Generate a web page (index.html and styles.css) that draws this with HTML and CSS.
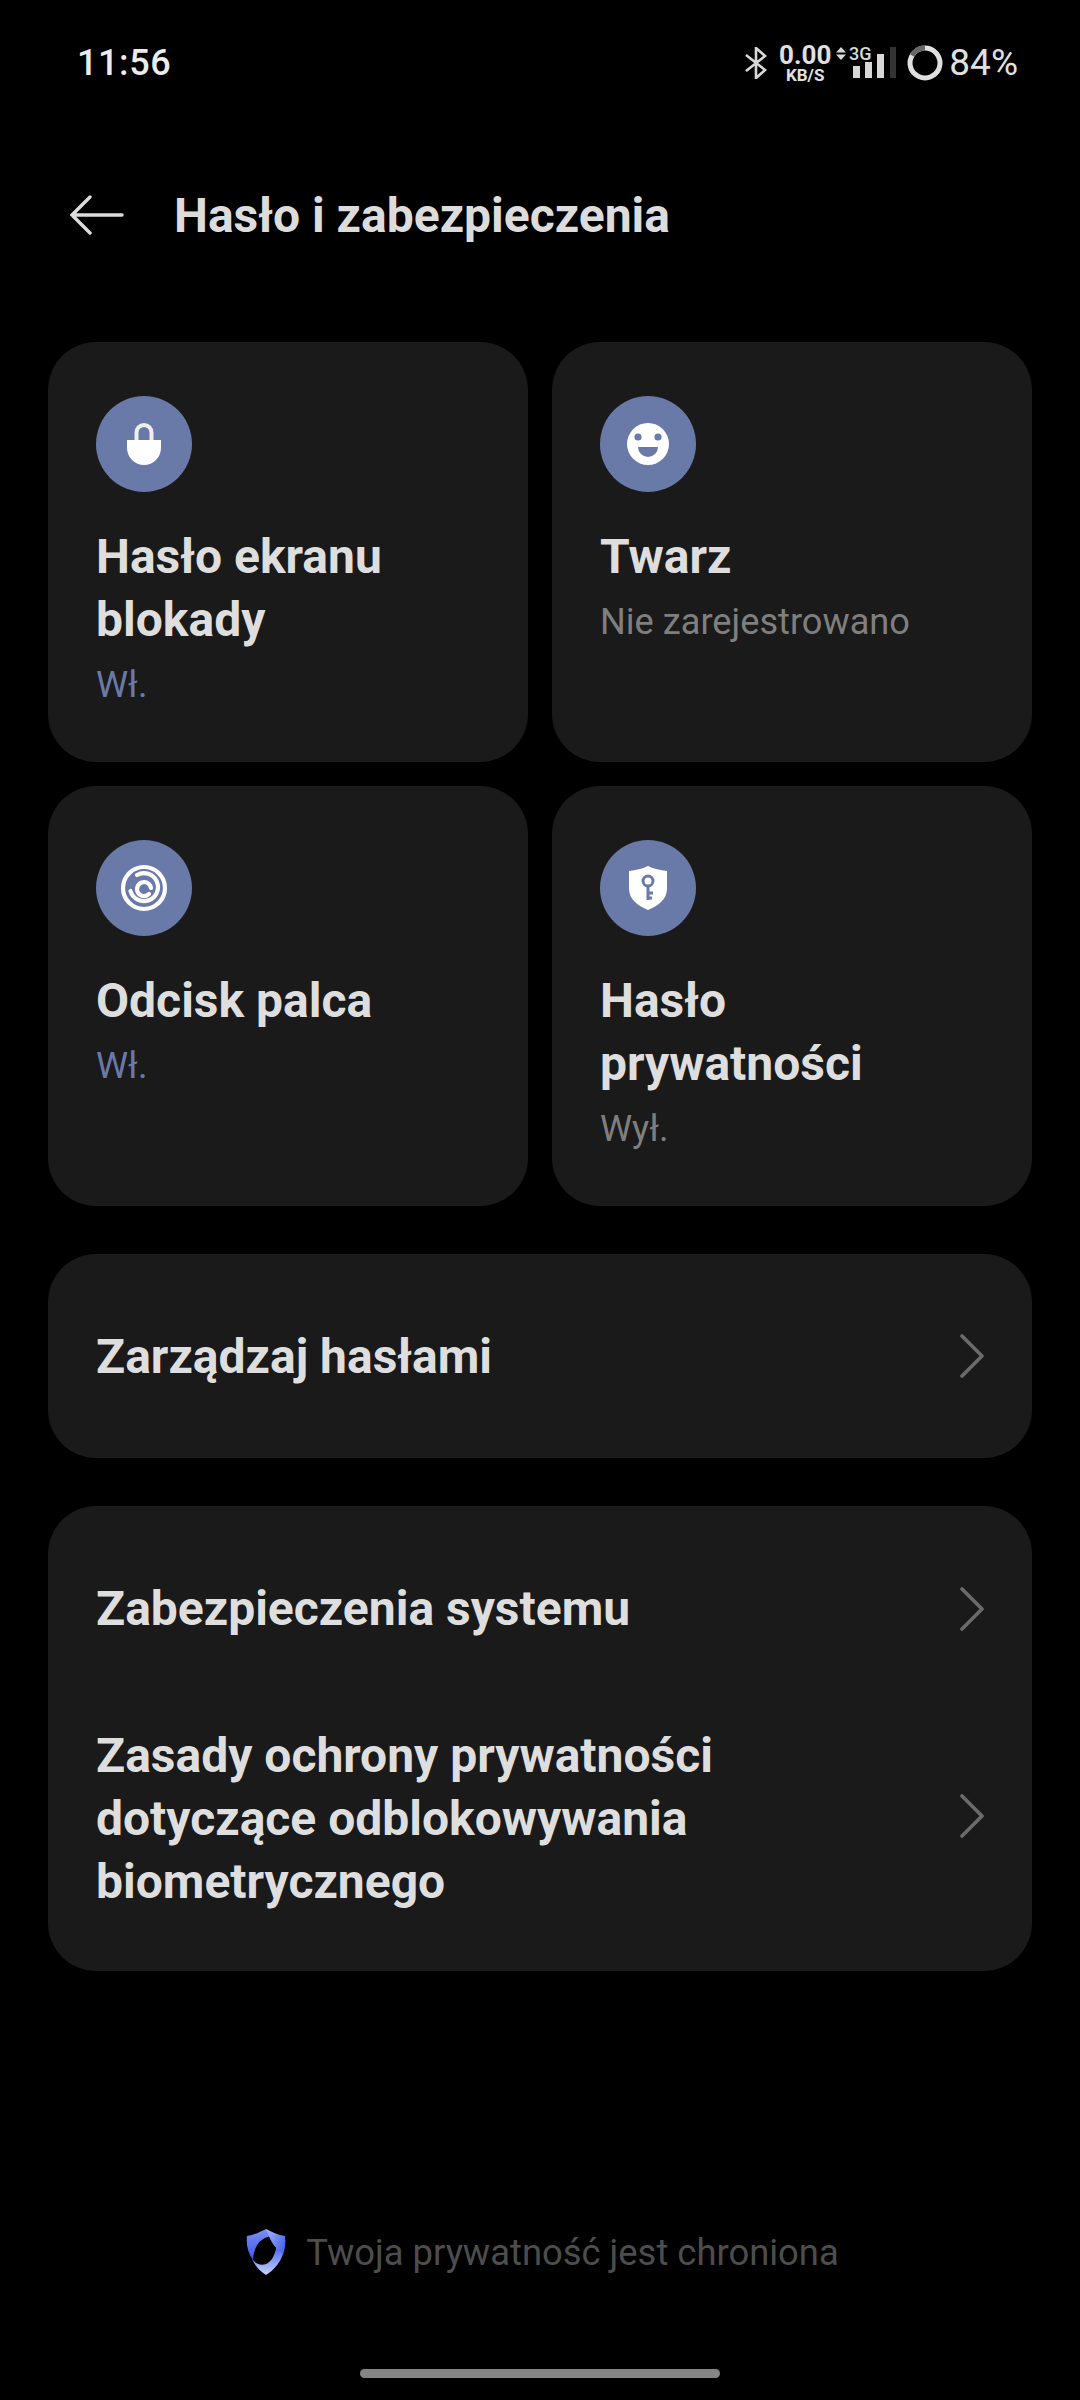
FILE: index.html
```html
<!DOCTYPE html>
<html lang="pl">
<head>
  <meta charset="UTF-8" />
  <meta name="viewport" content="width=device-width, initial-scale=1.0" />
  <title>Hasło i zabezpieczenia</title>
  <link rel="stylesheet" href="styles.css">
</head>
<body>
  <div class="status-bar">
    <span class="time">11:56</span>
    <div class="status-icons">
      <svg class="bt" width="22" height="32" viewBox="0 0 22 32" fill="none" stroke="#d8d8d8" stroke-width="2.6">
        <path d="M1 8 L20 23 L11 31 V1 L20 9 L1 24" />
      </svg>
      <div class="speed">
        <span class="speed-num">0.00</span>
        <span class="speed-unit">KB/S</span>
      </div>
      <svg class="net" width="60" height="40" viewBox="0 -4 60 40">
        <path d="M0 5.5 L5 0 L10 5.5 Z M0 7.5 L5 13 L10 7.5 Z" fill="#d8d8d8" />
        <text x="13" y="13" class="net-label">3G</text>
        <rect x="17" y="19" width="7" height="12" fill="#d8d8d8" />
        <rect x="29" y="15" width="7" height="16" fill="#d8d8d8" />
        <rect x="41" y="7" width="7" height="24" fill="#d8d8d8" />
        <rect x="54" y="0" width="6" height="31" fill="#333" />
      </svg>
      <svg class="battery" width="36" height="36" viewBox="0 0 36 36" fill="none" stroke-width="5">
        <circle cx="18" cy="18" r="15" stroke="#e0e0e0" />
        <path d="M18 3 A15 15 0 0 0 5 10.5" stroke="#666" />
      </svg>
      <span class="percent">84%</span>
    </div>
  </div>

  <header class="top-bar">
    <svg class="back" width="54" height="40" viewBox="0 0 54 40" fill="none" stroke="#dcdcdc" stroke-width="3.4" stroke-linecap="round">
      <path d="M2 20 H52 M20 2 L2 20 L20 38" />
    </svg>
    <h1 class="page-title">Hasło i zabezpieczenia</h1>
  </header>

  <main class="content">
    <div class="tile-grid">
      <div class="tile">
        <div class="tile-icon">
          <svg width="34" height="42" viewBox="0 0 34 42">
            <path d="M9.5 17 V9.5 A7.5 7.5 0 0 1 24.5 9.5 V17" fill="none" stroke="#eee" stroke-width="4" />
            <path d="M0 17 H34 V25 A17 17 0 0 1 0 25 Z" fill="#fff" />
          </svg>
        </div>
        <div class="tile-title">Hasło ekranu blokady</div>
        <div class="tile-sub on">Wł.</div>
      </div>
      <div class="tile">
        <div class="tile-icon">
          <svg width="44" height="44" viewBox="0 0 44 44">
            <circle cx="22" cy="22" r="21" fill="#fff" />
            <circle cx="12" cy="15" r="3.6" fill="#6a7aa8" />
            <circle cx="32" cy="15" r="3.6" fill="#6a7aa8" />
            <path d="M12 25 H32 A10 10 0 0 1 12 25 Z" fill="#6a7aa8" />
          </svg>
        </div>
        <div class="tile-title">Twarz</div>
        <div class="tile-sub">Nie zarejestrowano</div>
      </div>
      <div class="tile">
        <div class="tile-icon">
          <svg width="48" height="48" viewBox="0 0 48 48" fill="none" stroke="#fff" stroke-width="4.2" stroke-linecap="round">
            <circle cx="24" cy="24" r="21" />
            <path d="M17 11 A14 14 0 1 1 10.5 27" />
            <path d="M29 30 A7 7 0 1 1 31 24" />
          </svg>
        </div>
        <div class="tile-title">Odcisk palca</div>
        <div class="tile-sub on">Wł.</div>
      </div>
      <div class="tile">
        <div class="tile-icon">
          <svg width="40" height="46" viewBox="0 0 40 46">
            <path d="M20 1 C26 4 32 5 39 6 V24 C39 34 30 41 20 45 C10 41 1 34 1 24 V6 C8 5 14 4 20 1 Z" fill="#fff" />
            <circle cx="20" cy="16" r="5" fill="none" stroke="#6a7aa8" stroke-width="3" />
            <path d="M20 21 V35 M20 28 H25 M20 33 H24" fill="none" stroke="#6a7aa8" stroke-width="3" />
          </svg>
        </div>
        <div class="tile-title">Hasło prywatności</div>
        <div class="tile-sub">Wył.</div>
      </div>
    </div>

    <div class="list-card single">
      <div class="list-row">
        <span class="row-label">Zarządzaj hasłami</span>
        <svg class="chevron" width="24" height="44" viewBox="0 0 24 44" fill="none" stroke="#6b6b6b" stroke-width="3.6" stroke-linecap="round" stroke-linejoin="round">
          <path d="M2 2 L22 22 L2 42" />
        </svg>
      </div>
    </div>

    <div class="list-card">
      <div class="list-row">
        <span class="row-label">Zabezpieczenia systemu</span>
        <svg class="chevron" width="24" height="44" viewBox="0 0 24 44" fill="none" stroke="#6b6b6b" stroke-width="3.6" stroke-linecap="round" stroke-linejoin="round">
          <path d="M2 2 L22 22 L2 42" />
        </svg>
      </div>
      <div class="list-row">
        <span class="row-label">Zasady ochrony prywatności dotyczące odblokowywania biometrycznego</span>
        <svg class="chevron raised" width="24" height="44" viewBox="0 0 24 44" fill="none" stroke="#6b6b6b" stroke-width="3.6" stroke-linecap="round" stroke-linejoin="round">
          <path d="M2 2 L22 22 L2 42" />
        </svg>
      </div>
    </div>
  </main>

  <footer class="footer">
    <div class="privacy-note">
      <svg width="40" height="48" viewBox="0 0 40 48">
        <defs>
          <linearGradient id="bladeLeft" x1="0" y1="0" x2="0" y2="1">
            <stop offset="0" stop-color="#7b90f4" />
            <stop offset="1" stop-color="#3c58ea" />
          </linearGradient>
          <linearGradient id="bladeTop" x1="0" y1="0" x2="1" y2="0.6">
            <stop offset="0" stop-color="#a9b8f8" />
            <stop offset="1" stop-color="#4a66ee" />
          </linearGradient>
          <linearGradient id="bladeBottom" x1="0" y1="0" x2="0" y2="1">
            <stop offset="0" stop-color="#4a66ee" />
            <stop offset="1" stop-color="#c9d3fb" />
          </linearGradient>
        </defs>
        <path d="M1 8 C8 7 14 4 20 1 L26 8 C18 9 8 14 7 32 C2 25 0 17 1 8 Z" fill="url(#bladeLeft)" />
        <path d="M20 1 C26 4 32 7 39 8 C40 14 39 21 37 27 L30 20 C27 16 24 12 20 1 Z" fill="url(#bladeTop)" />
        <path d="M37 26 C34 35 28 42 20 47 C14 43 9 38 6 31 C9 35 14 38 20 36 C26 33 29 27 30 19 Z" fill="url(#bladeBottom)" />
        <path d="M20 16 C24 16 27 17 30 20 C29 26 25 32 20 36 C15 33 11 28 10 23 C12 19 16 16 20 16 Z" fill="#000" />
      </svg>
      <span>Twoja prywatność jest chroniona</span>
    </div>
    <div class="home-pill"></div>
  </footer>
</body>
</html>
```

FILE: styles.css
```css
* {
  box-sizing: border-box;
}

body {
  margin: 0;
  width: 1080px;
  height: 2400px;
  background: #000;
  color: #dcdcdc;
  font-family: Roboto, 'Noto Sans', sans-serif;
  display: flex;
  flex-direction: column;
  overflow: hidden;
}

.status-bar {
  height: 169px;
  padding: 41px 62px 0 77px;
  display: flex;
  justify-content: space-between;
  align-items: flex-start;
}

.time {
  font-size: 36px;
  line-height: 44px;
  font-weight: 500;
  color: #ececec;
  letter-spacing: 0.6px;
}

.status-icons {
  display: flex;
  align-items: center;
  height: 44px;
  color: #e0e0e0;
}

.bt {
  margin-right: 12px;
}

.speed {
  display: flex;
  flex-direction: column;
  align-items: center;
  margin-right: 5px;
  font-weight: 700;
}

.speed-num {
  font-size: 26px;
  line-height: 25px;
}

.speed-unit {
  font-size: 17px;
  line-height: 15px;
}

.net {
  margin-right: 11px;
}

.net-label {
  font-size: 18px;
  font-weight: 500;
  fill: #d8d8d8;
}

.battery {
  margin-right: 6px;
}

.percent {
  font-size: 37px;
  line-height: 44px;
}

.top-bar {
  height: 92px;
  padding-left: 70px;
  display: flex;
  align-items: center;
}

.back {
  margin-right: 50px;
}

.page-title {
  margin: 0;
  font-size: 48px;
  font-weight: 700;
  color: #dcdcdc;
}

.content {
  padding: 81px 48px 0;
  display: flex;
  flex-direction: column;
  gap: 48px;
}

.tile-grid {
  display: grid;
  grid-template-columns: 480px 480px;
  grid-auto-rows: 420px;
  gap: 24px;
}

.tile {
  background: #1a1a1a;
  border-radius: 48px;
  padding: 54px 48px 0;
}

.tile-icon {
  width: 96px;
  height: 96px;
  border-radius: 50%;
  background: #6a7aa8;
  display: flex;
  align-items: center;
  justify-content: center;
  margin-bottom: 33px;
}

.tile-title {
  font-size: 48px;
  line-height: 63px;
  font-weight: 700;
  color: #dedede;
}

.tile-sub {
  font-size: 36.2px;
  line-height: 42px;
  margin-top: 13px;
  color: #7f7f7f;
}

.tile-sub.on {
  color: #6a7aa8;
}

.list-card {
  background: #1a1a1a;
  border-radius: 48px;
  padding: 71px 48px 58px;
  display: flex;
  flex-direction: column;
  gap: 84px;
}

.list-card.single {
  height: 204px;
  justify-content: center;
  padding: 0 48px;
}

.list-row {
  display: flex;
  align-items: center;
  justify-content: space-between;
}

.chevron.raised {
  margin-bottom: 6px;
}

.row-label {
  width: 680px;
  font-size: 48px;
  line-height: 63px;
  font-weight: 700;
  color: #dedede;
}

.footer {
  margin-top: auto;
  display: flex;
  flex-direction: column;
  align-items: center;
}

.privacy-note {
  display: flex;
  align-items: center;
  gap: 20px;
  padding-left: 5px;
  font-size: 36.4px;
  color: #4d4d4d;
  margin-bottom: 93px;
}

.home-pill {
  width: 360px;
  height: 9px;
  border-radius: 5px;
  background: #858585;
  margin-bottom: 22px;
}
```
